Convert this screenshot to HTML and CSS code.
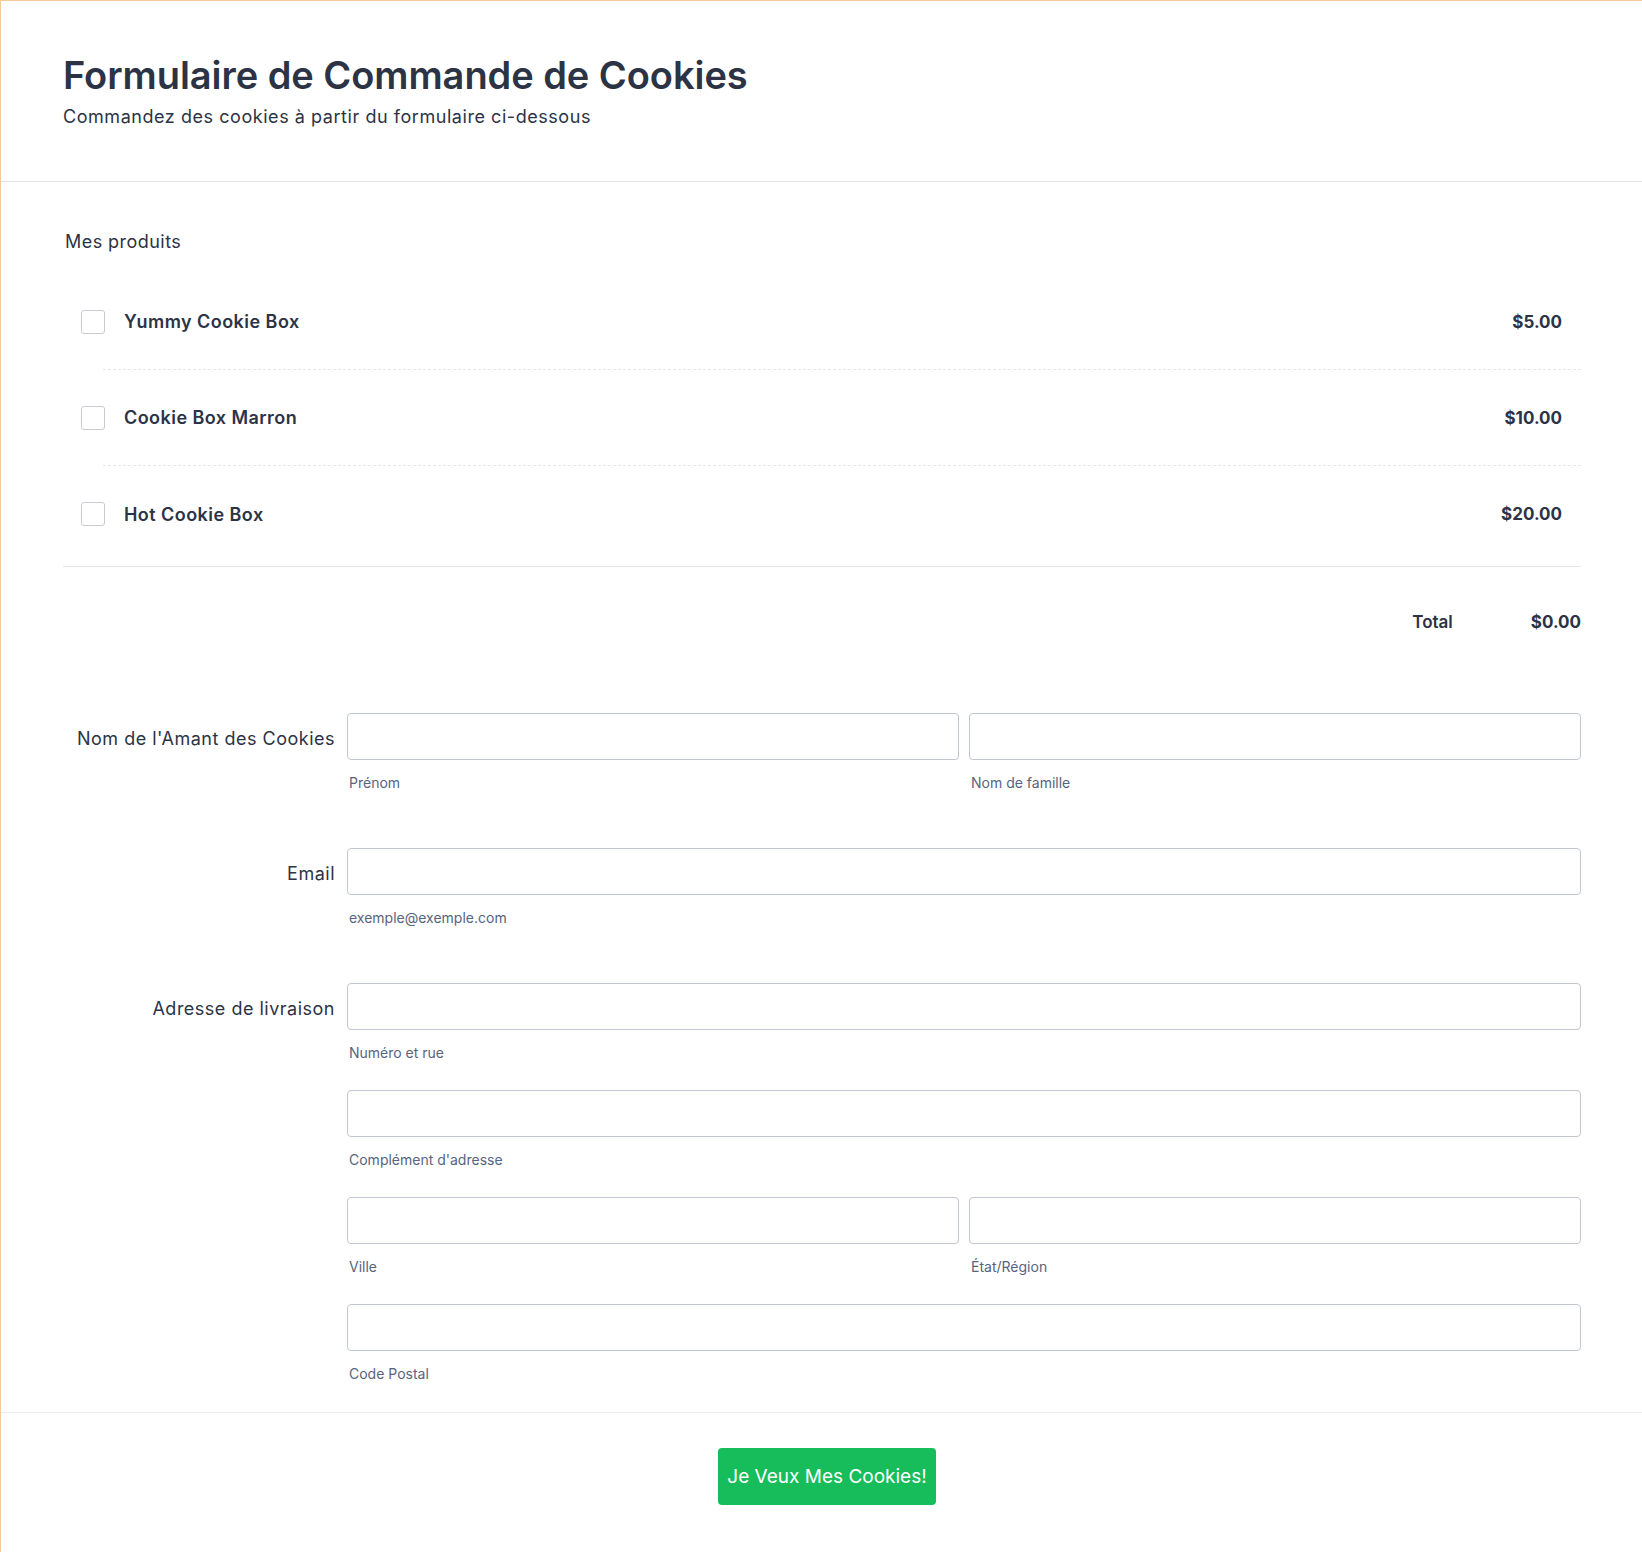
FILE: index.html
```html
<!DOCTYPE html>
<html lang="fr">
<head>
  <meta charset="UTF-8">
  <title>Formulaire de Commande de Cookies</title>
  <link rel="stylesheet" href="styles.css">
</head>
<body>
  <form class="form-card">
    <header class="form-header">
      <h1>Formulaire de Commande de Cookies</h1>
      <p>Commandez des cookies à partir du formulaire ci-dessous</p>
    </header>

    <section class="form-body">
      <div class="products-title">Mes produits</div>

      <div class="products">
        <label class="product">
          <input type="checkbox" class="product-check">
          <span class="product-body">
            <span class="product-name">Yummy Cookie Box</span>
            <span class="product-price">$5.00</span>
          </span>
        </label>
        <label class="product">
          <input type="checkbox" class="product-check">
          <span class="product-body">
            <span class="product-name">Cookie Box Marron</span>
            <span class="product-price">$10.00</span>
          </span>
        </label>
        <label class="product last">
          <input type="checkbox" class="product-check">
          <span class="product-body">
            <span class="product-name">Hot Cookie Box</span>
            <span class="product-price">$20.00</span>
          </span>
        </label>
      </div>

      <div class="total-row">
        <span class="total-label">Total</span>
        <span class="total-value">$0.00</span>
      </div>

      <div class="fields">
        <div class="field">
          <label class="field-label">Nom de l'Amant des Cookies</label>
          <div class="field-inputs">
            <div class="pair">
              <div class="sub">
                <input type="text" class="text-input">
                <span class="sublabel">Prénom</span>
              </div>
              <div class="sub">
                <input type="text" class="text-input">
                <span class="sublabel">Nom de famille</span>
              </div>
            </div>
          </div>
        </div>

        <div class="field">
          <label class="field-label">Email</label>
          <div class="field-inputs">
            <div class="sub">
              <input type="email" class="text-input">
              <span class="sublabel">exemple@exemple.com</span>
            </div>
          </div>
        </div>

        <div class="field">
          <label class="field-label">Adresse de livraison</label>
          <div class="field-inputs address">
            <div class="sub">
              <input type="text" class="text-input">
              <span class="sublabel">Numéro et rue</span>
            </div>
            <div class="sub">
              <input type="text" class="text-input">
              <span class="sublabel">Complément d'adresse</span>
            </div>
            <div class="pair">
              <div class="sub">
                <input type="text" class="text-input">
                <span class="sublabel">Ville</span>
              </div>
              <div class="sub">
                <input type="text" class="text-input">
                <span class="sublabel">État/Région</span>
              </div>
            </div>
            <div class="sub">
              <input type="text" class="text-input">
              <span class="sublabel">Code Postal</span>
            </div>
          </div>
        </div>
      </div>
    </section>

    <footer class="form-footer">
      <button type="button" class="submit-btn">Je Veux Mes Cookies!</button>
    </footer>
  </form>
</body>
</html>
```

FILE: styles.css
```css
html, body {
  height: 100%;
}

body {
  margin: 0;
  padding: 1px 0 0 1px;
  box-sizing: border-box;
  background: #f1c99b;
  font-family: Inter, "Noto Sans", sans-serif;
  color: #2c3345;
  overflow: hidden;
}

.form-card {
  background: #fff;
  min-height: 100%;
}

.form-header {
  padding: 51px 61px 51px 62px;
  border-bottom: 1px solid #e3e3e6;
}

.form-header h1 {
  margin: 0;
  font-size: 38px;
  line-height: 46px;
  font-weight: 600;
  letter-spacing: -0.05px;
}

.form-header p {
  margin: 5px 0 0;
  font-size: 18px;
  line-height: 27px;
  letter-spacing: 0.55px;
}

.form-body {
  padding: 46px 61px 28px 62px;
}

.products-title {
  padding-left: 2px;
  font-size: 18px;
  line-height: 27px;
  font-weight: 400;
  letter-spacing: 0.45px;
}

.products {
  margin-top: 19px;
  padding-bottom: 4px;
  border-bottom: 1px solid #e6e6ec;
}

.product {
  display: flex;
  padding-left: 18px;
  cursor: pointer;
}

.product-check {
  appearance: none;
  -webkit-appearance: none;
  align-self: center;
  width: 24px;
  height: 24px;
  margin: 0;
  border: 1px solid #c9cbd6;
  border-radius: 3px;
  background: #fff;
  flex-shrink: 0;
}

.product-body {
  flex: 1;
  display: flex;
  align-items: center;
  justify-content: space-between;
  height: 96px;
  box-sizing: border-box;
  margin-left: -2px;
  padding: 0 19px 0 21px;
  border-bottom: 1px dashed #e6e7ec;
}

.product.last .product-body {
  border-bottom: none;
}

.product-name {
  font-size: 18px;
  font-weight: 600;
  letter-spacing: 0.45px;
}

.product-price {
  font-size: 17px;
  font-weight: 700;
}

.total-row {
  display: flex;
  justify-content: flex-end;
  gap: 78px;
  padding-top: 43px;
  font-size: 17px;
  line-height: 24px;
  font-weight: 600;
}

.total-value {
  font-weight: 700;
}

.fields {
  margin-top: 79px;
}

.field {
  display: flex;
  gap: 12px;
  margin-bottom: 55px;
}

.field:last-child {
  margin-bottom: 0;
}

.field-label {
  width: 272px;
  flex-shrink: 0;
  text-align: right;
  font-size: 18px;
  line-height: 47px;
  padding-top: 2px;
  box-sizing: border-box;
  letter-spacing: 0.5px;
}

.field-inputs {
  flex: 1;
  display: flex;
  flex-direction: column;
  gap: 27px;
}

.pair {
  display: flex;
  gap: 10px;
}

.sub {
  flex: 1;
  display: flex;
  flex-direction: column;
}

.text-input {
  width: 100%;
  height: 47px;
  box-sizing: border-box;
  margin: 0;
  border: 1px solid #c3c6d3;
  border-radius: 4px;
  background: #fff;
  font-family: inherit;
  font-size: 16px;
}

.sublabel {
  margin-top: 13px;
  padding-left: 2px;
  font-size: 14px;
  line-height: 20px;
  color: #57647e;
}

.form-footer {
  border-top: 1px solid #ebebf0;
  padding: 35px 0 40px 11px;
  text-align: center;
}

.submit-btn {
  height: 57px;
  padding: 0 9px;
  border: none;
  border-radius: 4px;
  background: #18bd5b;
  color: #fff;
  font-family: inherit;
  font-size: 19px;
  font-weight: 400;
  cursor: pointer;
}
```
